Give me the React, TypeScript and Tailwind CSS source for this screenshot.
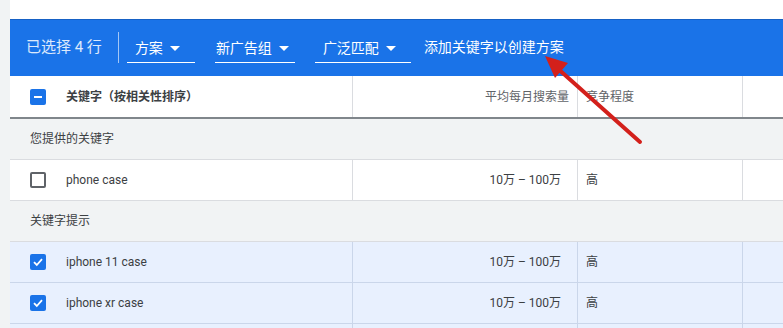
const font = { fontFamily: "Roboto, 'Noto Sans CJK SC', sans-serif" };

function Caret() {
  return (
    <svg width="10" height="5" viewBox="0 0 10 5" className="ml-[7px]">
      <path d="M0 0 L10 0 L5 5 Z" fill="white" />
    </svg>
  );
}

function Dropdown({ label, w, pl }: { label: string; w: string; pl: string }) {
  return (
    <div className={`flex h-[28px] items-center border-b border-white ${w} ${pl}`}>
      <span className="text-[14px] text-white">{label}</span>
      <Caret />
    </div>
  );
}

function Checkbox({ state }: { state: "on" | "off" | "mixed" }) {
  if (state === "off") {
    return <div className="h-[16px] w-[16px] rounded-[2px] border-2 border-[#5f6368] bg-white" />;
  }
  return (
    <div className="flex h-[16px] w-[16px] items-center justify-center rounded-[2px] bg-[#1a73e8]">
      {state === "mixed" ? (
        <div className="h-[2px] w-[8px] bg-white" />
      ) : (
        <svg width="12" height="12" viewBox="0 0 12 12">
          <path d="M2 6.2 L4.8 9 L10 3.2" fill="none" stroke="white" strokeWidth="1.8" />
        </svg>
      )}
    </div>
  );
}

function DataRow({ name, selected, checked }: { name?: string; selected?: boolean; checked?: boolean }) {
  const line = selected ? "border-[#cad6ea]" : "border-[#dadce0]";
  return (
    <div className={`flex h-[41px] shrink-0 border-b ${line} ${selected ? "bg-[#e8f0fe]" : "bg-white"}`}>
      <div className={`flex w-[343px] items-center border-r ${line} pl-[20px]`}>
        {name && <Checkbox state={checked ? "on" : "off"} />}
        {name && <span className="ml-[20px] text-[12px] text-[#3c4043]">{name}</span>}
      </div>
      <div className={`flex w-[225px] items-center justify-end border-r ${line} pr-[16px] text-[12px] text-[#3c4043]`}>
        {name && "10万 – 100万"}
      </div>
      <div className={`flex w-[165px] items-center border-r ${line} pl-[8px] text-[12px] text-[#3c4043]`}>
        {name && "高"}
      </div>
      <div className="flex-1" />
    </div>
  );
}

function GroupRow({ label }: { label: string }) {
  return (
    <div className="flex h-[41px] shrink-0 items-center border-b border-[#dadce0] bg-[#f1f3f4] pl-[20px] text-[12px] text-[#3c4043]">
      {label}
    </div>
  );
}

export default function App() {
  return (
    <div className="relative flex h-[328px] w-[783px] overflow-hidden bg-[#f1f3f4]" style={font}>
      <div className="w-[10px] shrink-0" />
      <div className="flex flex-1 flex-col bg-white">
        <div className="h-[19px] shrink-0 bg-white" />

        {/* selection toolbar */}
        <div className="flex h-[57px] shrink-0 items-center bg-[#1a73e8] pl-[16px] shadow-[inset_0_1px_0_rgba(0,0,0,0.15)]">
          <span className="text-[15px] text-white/85">已选择 4 行</span>
          <div className="ml-[16px] h-[31px] w-px bg-white/60" />
          <div className="ml-[8px] flex items-center gap-[20px] pt-[3px]">
            <Dropdown label="方案" w="w-[68px]" pl="pl-[8px]" />
            <Dropdown label="新广告组" w="w-[80px]" pl="pl-[1px]" />
            <Dropdown label="广泛匹配" w="w-[96px]" pl="pl-[8px]" />
          </div>
          <span className="ml-[13px] text-[14px] text-white">添加关键字以创建方案</span>
        </div>

        {/* header */}
        <div className="flex h-[43px] shrink-0 border-b-2 border-[#80868b] bg-white">
          <div className="flex w-[343px] items-center border-r border-[#dadce0] pl-[20px]">
            <Checkbox state="mixed" />
            <span className="ml-[20px] text-[12px] font-bold text-[#3c4043]">关键字（按相关性排序）</span>
          </div>
          <div className="flex w-[225px] items-center justify-end border-r border-[#dadce0] pr-[8px] text-[12px] text-[#5f6368]">
            平均每月搜索量
          </div>
          <div className="flex w-[165px] items-center border-r border-[#dadce0] pl-[8px] text-[12px] text-[#5f6368]">
            竞争程度
          </div>
          <div className="flex-1" />
        </div>

        <GroupRow label="您提供的关键字" />
        <DataRow name="phone case" />
        <GroupRow label="关键字提示" />
        <DataRow name="iphone 11 case" selected checked />
        <DataRow name="iphone xr case" selected checked />
        <DataRow selected />
      </div>

      {/* red annotation arrow */}
      <svg className="pointer-events-none absolute left-0 top-0" width="783" height="328">
        <line x1="640" y1="142" x2="556" y2="67" stroke="#d3201b" strokeWidth="4" strokeLinecap="round" />
        <path d="M545 56 L568 63 L555 78 Z" fill="#d3201b" />
      </svg>
    </div>
  );
}
